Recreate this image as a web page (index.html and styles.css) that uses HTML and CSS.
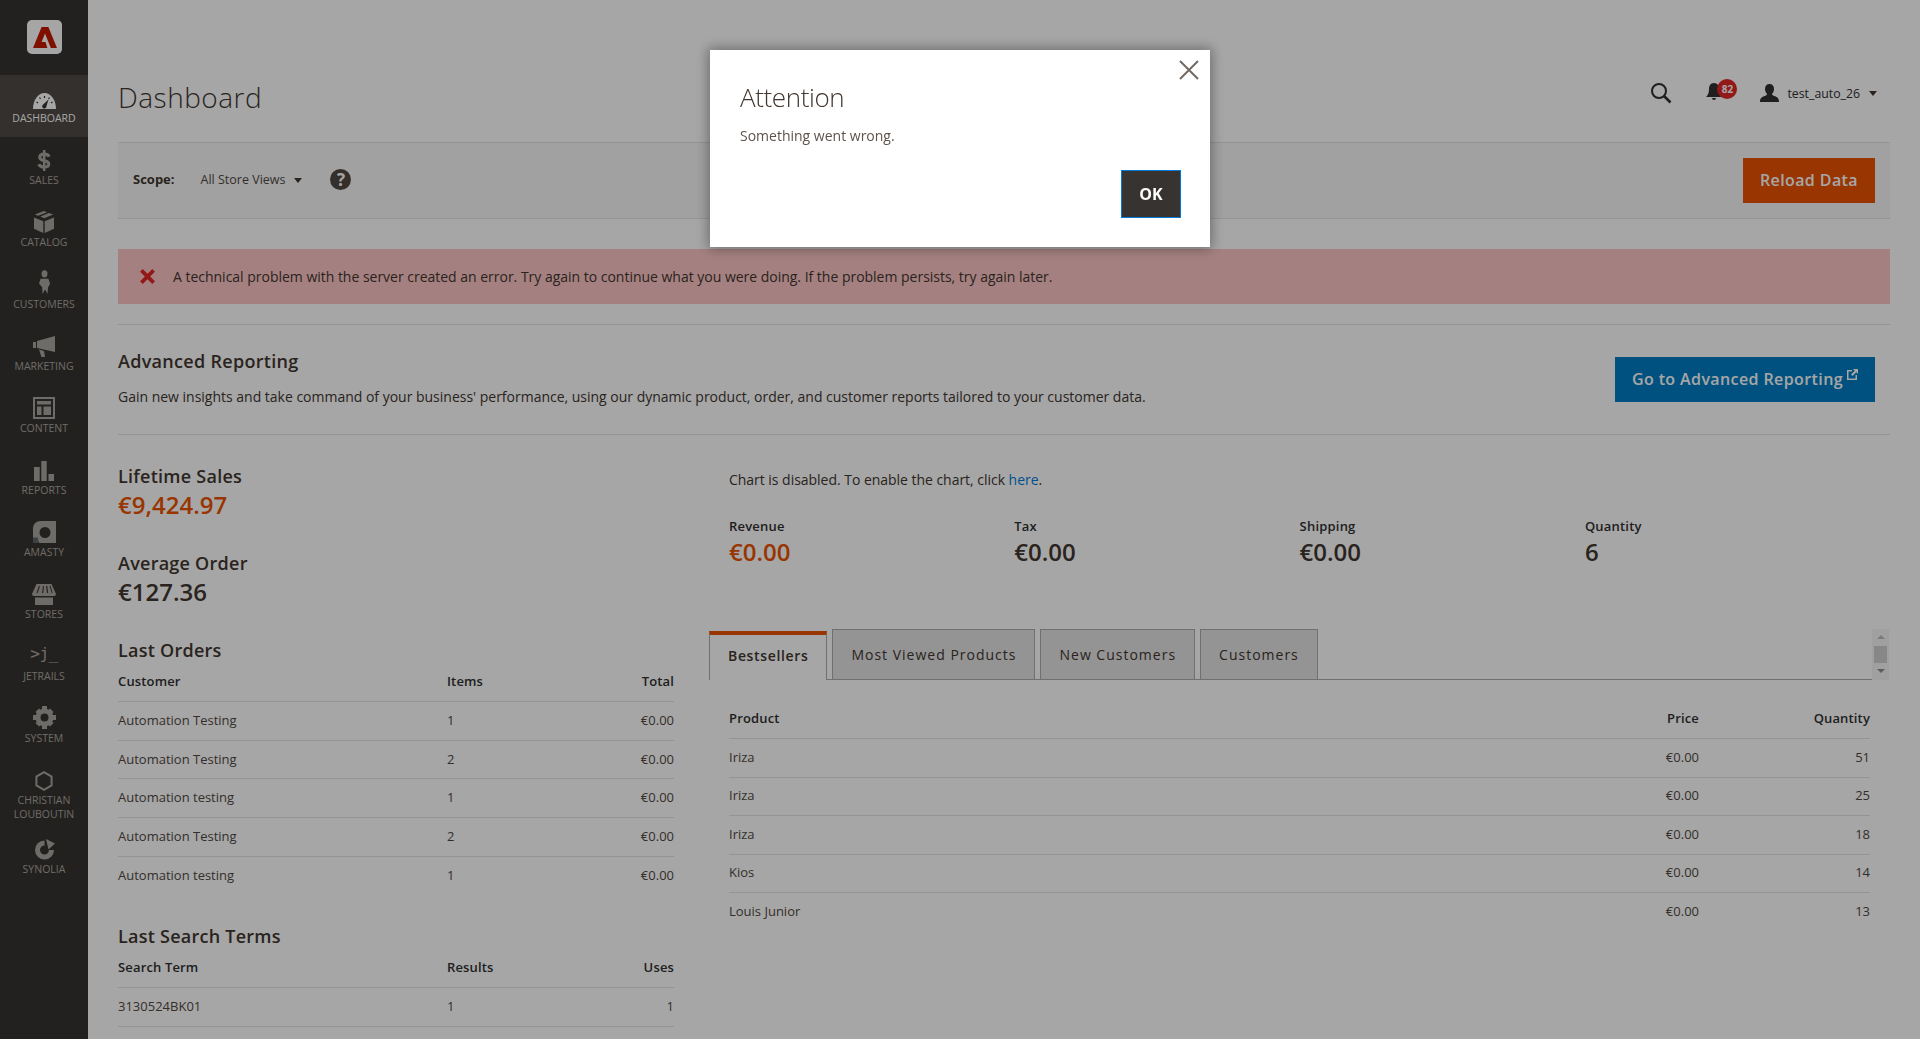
FILE: index.html
```html
<!DOCTYPE html>
<html lang="en">
<head>
  <meta charset="UTF-8">
  <title>Dashboard / Magento Admin</title>
  <link rel="stylesheet" href="styles.css">
</head>
<body>

<div class="page">
  <nav class="sidebar">
    <div class="logo">
      <div class="logo-box">
        <svg width="24" height="21" viewBox="0 0 24 21"><path d="M8.600 0h6.800L24 21h-6.200L12 6.600 8.600 15h3.900l1.900 6H0z" fill="#c41a00"/></svg>
      </div>
    </div>
    <a class="nav-item active">
      <svg class="nav-icon" width="23" height="16" viewBox="0 0 23 16"><path d="M0 16C0 7 5 0 11.500 0S23 7 23 16z" fill="#fff"/><path d="M3.500 9l1.500 1M6.500 4.500l1 1.500M11.500 3v2M16.500 4.500l-1 1.500M19.500 9L18 10" stroke="#373330" stroke-width="1.200"/><path d="M15.500 6.500l-2 6.500a2.200 2.200 0 1 1-3.300-1.600z" fill="#373330"/></svg>
      <span>Dashboard</span>
    </a>
    <a class="nav-item">
      <svg class="nav-icon" width="14" height="21" viewBox="0 0 14 22"><path d="M12.500 7C11.500 5 9.500 4.300 7.200 4.300 4.500 4.300 2.500 5.500 2.500 7.700c0 5 9.500 2.300 9.500 7 0 2.200-2 3.200-4.800 3.200-2.700 0-4.700-1-5.700-3" fill="none" stroke="#aaa6a0" stroke-width="3.200"/><path d="M7.200 0v22" stroke="#aaa6a0" stroke-width="2.600"/></svg>
      <span>Sales</span>
    </a>
    <a class="nav-item">
      <svg class="nav-icon" width="20" height="22" viewBox="0 0 20 22"><path d="M0 6.500l9.300 3.700V22L0 17.800zM20 6.500l-9.300 3.700V22L20 17.800zM10 0l3 1.200-8.800 3.600-3.400-1.300zM15 2l4.200 1.500-8.900 3.800-4-1.700z" fill="#aaa6a0"/></svg>
      <span>Catalog</span>
    </a>
    <a class="nav-item">
      <svg class="nav-icon person" width="11" height="24" viewBox="0 0 14 25" preserveAspectRatio="none"><circle cx="7" cy="4" r="3.800" fill="#aaa6a0"/><path d="M2 9h10l2 5-1.500 3-1 1-.7 7-2.300-4-1.500 0-2.300 4-.7-7-1-1L0 14z" fill="#aaa6a0"/></svg>
      <span>Customers</span>
    </a>
    <a class="nav-item">
      <svg class="nav-icon" width="22" height="21" viewBox="0 0 22 21"><path d="M0 6h3v6H0zM4 5l18-5v16L4 12zM6 13.500l5 1.500 1 6H8.500z" fill="#aaa6a0"/></svg>
      <span>Marketing</span>
    </a>
    <a class="nav-item">
      <svg class="nav-icon" width="22" height="22" viewBox="0 0 22 22"><path fill-rule="evenodd" d="M0 0h22v22H0zM2 2v18h18V2zM4 4h14v3.500H4zM4 9.500h4.500V18H4zM10.500 9.500H18V18h-7.500z" fill="#aaa6a0"/></svg>
      <span>Content</span>
    </a>
    <a class="nav-item">
      <svg class="nav-icon" width="20" height="20" viewBox="0 0 20 20"><path d="M0 6h5.700v14H0zM7.300 0h5.400v20H7.300zM14.500 13H20v7h-5.500z" fill="#aaa6a0"/></svg>
      <span>Reports</span>
    </a>
    <a class="nav-item">
      <svg class="nav-icon" width="23" height="22" viewBox="0 0 23 22"><path fill-rule="evenodd" d="M8 0h15v22H6l-1-3H0V8C0 3 3 0 8 0zm4 6a5.500 5.500 0 1 0 0 11 5.500 5.500 0 0 0 0-11z" fill="#aaa6a0"/><path d="M0 16.500h5V22H0z" fill="#5d6468"/></svg>
      <span>Amasty</span>
    </a>
    <a class="nav-item">
      <svg class="nav-icon" width="24" height="21" viewBox="0 0 24 21"><path fill-rule="evenodd" d="M4.500 0h15L24 10a2 2 0 0 1-2 2H2a2 2 0 0 1-2-2zM7 2L4.500 9h1.200L8 2zM11 2l-1 7h1.200L12 2zM14 2l1 7h1.200L15.200 2zM17.500 2l2.200 7h.9l-2-7zM3 13.500h18V21H3z" fill="#aaa6a0"/></svg>
      <span>Stores</span>
    </a>
    <a class="nav-item">
      <span class="nav-mono">&gt;j_</span>
      <span>JetRails</span>
    </a>
    <a class="nav-item">
      <svg class="nav-icon" width="23" height="23" viewBox="0 0 23 23"><circle cx="11.500" cy="11.500" r="6.500" fill="none" stroke="#aaa6a0" stroke-width="5"/><path d="M9 0h5v5H9zM9 18h5v5H9zM0 9h5v5H0zM18 9h5v5h-5zM2.500 6l3.500-3.500 3 3-3.500 3.500zM17 2.500L20.500 6l-3 3.500-3.500-3.500zM2.500 17L6 20.500l3-3-3.500-3.500zM17 20.500l3.500-3.500-3-3-3.500 3.500z" fill="#aaa6a0"/></svg>
      <span>System</span>
    </a>
    <a class="nav-item tall">
      <svg class="nav-icon" width="18" height="20" viewBox="0 0 18 20"><path d="M9 1.200l7.600 4.400v8.800L9 18.800l-7.600-4.400V5.600z" fill="none" stroke="#aaa6a0" stroke-width="2"/></svg>
      <span>Christian Louboutin</span>
    </a>
    <a class="nav-item">
      <svg class="nav-icon" width="21" height="21" viewBox="0 0 21 21"><path d="M10.500 4A7 7 0 1 0 17.500 11" fill="none" stroke="#aaa6a0" stroke-width="5"/><path d="M12 0l9 4.500-6.500 6z" fill="#aaa6a0"/></svg>
      <span>Synolia</span>
    </a>
  </nav>

  <main class="main">
    <header class="page-header">
      <h1>Dashboard</h1>
      <div class="header-actions">
        <svg class="search-icon" width="22" height="22" viewBox="0 0 22 22"><circle cx="9" cy="9" r="7" fill="none" stroke="#303030" stroke-width="2"/><path d="M14 14l6.500 6.500" stroke="#303030" stroke-width="2.600"/></svg>
        <div class="bell">
          <svg width="16" height="18" viewBox="0 0 16 18"><path d="M8 0c3.500 0 5 3 5 6 0 4 1 6 3 8H0c2-2 3-4 3-8 0-3 1.500-6 5-6zM6 15h4a2 2 0 0 1-4 0z" fill="#303030"/></svg>
          <span class="badge">82</span>
        </div>
        <div class="user">
          <svg width="19" height="18" viewBox="0 0 19 18"><path d="M9.500 0c3 0 4.500 2 4.500 5 0 2-1 4-2 5 0 1 1 1.500 3 2.300 2 .8 4 1.700 4 5.700H0c0-4 2-4.900 4-5.700 2-.8 3-1.300 3-2.300-1-1-2-3-2-5 0-3 1.500-5 4.500-5z" fill="#303030"/></svg>
          <span class="user-name">test_auto_26</span>
          <i class="caret"></i>
        </div>
      </div>
    </header>

    <div class="scope-bar">
      <strong>Scope:</strong>
      <span class="scope-value">All Store Views</span>
      <i class="caret dark"></i>
      <span class="help">?</span>
      <a class="btn btn-orange">Reload Data</a>
    </div>

    <div class="error-msg">
      <svg width="17" height="17" viewBox="0 0 16 16"><path d="M1 3.500L3.500 1 8 5.500 12.500 1 15 3.500 10.500 8l4.500 4.500-2.500 2.500L8 10.500 3.500 15 1 12.500 5.500 8z" fill="#e22626"/></svg>
      <span>A technical problem with the server created an error. Try again to continue what you were doing. If the problem persists, try again later.</span>
    </div>

    <section class="advanced">
      <div>
        <h2>Advanced Reporting</h2>
        <p>Gain new insights and take command of your business' performance, using our dynamic product, order, and customer reports tailored to your customer data.</p>
      </div>
      <a class="btn btn-blue">Go to Advanced Reporting
        <svg class="ext" width="11" height="11" viewBox="0 0 11 11"><path d="M0 1h5v1.500H1.500v7h7V6H10v5H0zM6 0h5v5L9.300 3.300 5.500 7 4 5.500l3.700-3.800z" fill="#fff"/></svg>
      </a>
    </section>

    <div class="dash-grid">
      <div class="col-left">
        <div class="stat">
          <h3>Lifetime Sales</h3>
          <div class="stat-value orange">€9,424.97</div>
        </div>
        <div class="stat">
          <h3>Average Order</h3>
          <div class="stat-value">€127.36</div>
        </div>

        <h3 class="table-title">Last Orders</h3>
        <table class="data no-end-line">
          <thead><tr><th class="c1">Customer</th><th class="c2">Items</th><th class="num">Total</th></tr></thead>
          <tbody>
            <tr><td>Automation Testing</td><td>1</td><td class="num">€0.00</td></tr>
            <tr><td>Automation Testing</td><td>2</td><td class="num">€0.00</td></tr>
            <tr><td>Automation testing</td><td>1</td><td class="num">€0.00</td></tr>
            <tr><td>Automation Testing</td><td>2</td><td class="num">€0.00</td></tr>
            <tr><td>Automation testing</td><td>1</td><td class="num">€0.00</td></tr>
          </tbody>
        </table>

        <h3 class="table-title search-title">Last Search Terms</h3>
        <table class="data">
          <thead><tr><th class="c1">Search Term</th><th class="c2">Results</th><th class="num">Uses</th></tr></thead>
          <tbody>
            <tr><td>3130524BK01</td><td>1</td><td class="num">1</td></tr>
          </tbody>
        </table>
      </div>

      <div class="col-right">
        <p class="chart-note">Chart is disabled. To enable the chart, click <a>here</a>.</p>
        <div class="totals">
          <div><label>Revenue</label><b class="orange">€0.00</b></div>
          <div><label>Tax</label><b>€0.00</b></div>
          <div><label>Shipping</label><b>€0.00</b></div>
          <div><label>Quantity</label><b>6</b></div>
        </div>

        <div class="tabs">
          <a class="tab current">Bestsellers</a>
          <a class="tab">Most Viewed Products</a>
          <a class="tab">New Customers</a>
          <a class="tab">Customers</a>
          <div class="tab-scroll">
            <i class="arrow up"></i>
            <i class="thumb"></i>
            <i class="arrow down"></i>
          </div>
        </div>

        <table class="data products no-end-line">
          <thead><tr><th>Product</th><th class="num c-price">Price</th><th class="num c-qty">Quantity</th></tr></thead>
          <tbody>
            <tr><td>Iriza</td><td class="num">€0.00</td><td class="num">51</td></tr>
            <tr><td>Iriza</td><td class="num">€0.00</td><td class="num">25</td></tr>
            <tr><td>Iriza</td><td class="num">€0.00</td><td class="num">18</td></tr>
            <tr><td>Kios</td><td class="num">€0.00</td><td class="num">14</td></tr>
            <tr><td>Louis Junior</td><td class="num">€0.00</td><td class="num">13</td></tr>
          </tbody>
        </table>
      </div>
    </div>
  </main>
</div>

<div class="overlay"></div>

<div class="modal">
  <svg class="modal-close" width="20" height="20" viewBox="0 0 20 20"><path d="M1 1l18 18M19 1L1 19" stroke="#736963" stroke-width="2"/></svg>
  <h2>Attention</h2>
  <p>Something went wrong.</p>
  <div class="modal-footer">
    <button class="btn-ok">OK</button>
  </div>
</div>

</body>
</html>
```

FILE: styles.css
```css
* {
  box-sizing: border-box;
}
html, body {
  margin: 0;
  height: 1039px;
  overflow: hidden;
}
body {
  font-family: "Open Sans", sans-serif;
  font-size: 14px;
  color: #41362f;
  background-color: #fff;
}
h1, h2, h3, p {
  margin: 0;
}
.page {
  display: flex;
  height: 1039px;
}

/* sidebar */
.sidebar {
  width: 88px;
  flex-shrink: 0;
  background-color: #373330;
}
.logo {
  height: 75px;
  padding: 20px 0 0 27px;
}
.logo-box {
  width: 35px;
  height: 34px;
  background-color: #fff;
  border-radius: 5px;
  display: flex;
  align-items: center;
  justify-content: center;
}
.nav-item {
  height: 62px;
  display: flex;
  flex-direction: column;
  align-items: center;
  justify-content: flex-end;
  padding-bottom: 12px;
  color: #aaa6a0;
  font-size: 10.5px;
  line-height: 14px;
  text-transform: uppercase;
  text-align: center;
}
.nav-item.active {
  background-color: #4f4a46;
  color: #fff;
}
.nav-item.tall {
  height: 69px;
  padding-bottom: 5px;
}
.nav-icon {
  margin-bottom: 2px;
}
.nav-icon.person {
  margin-bottom: 3px;
}
.nav-mono {
  font-family: "DejaVu Sans Mono", monospace;
  font-size: 16px;
  line-height: 19px;
  margin-bottom: 6px;
  letter-spacing: -.5px;
  text-transform: none;
}

/* main */
.main {
  flex: 1;
  padding: 0 30px;
  min-width: 0;
}
.page-header {
  height: 142px;
  display: flex;
  justify-content: space-between;
  align-items: flex-start;
}
.page-header h1 {
  font-size: 28px;
  font-weight: 300;
  line-height: 38px;
  margin-top: 78px;
  letter-spacing: .5px;
}
.header-actions {
  display: flex;
  align-items: center;
  margin-top: 82px;
  padding-right: 13px;
  color: #303030;
  font-size: 12.3px;
}
.search-icon {
  margin-right: 34px;
}
.bell {
  position: relative;
  width: 54px;
  height: 20px;
}
.badge {
  position: absolute;
  left: 11px;
  top: -4px;
  width: 20px;
  height: 20px;
  border-radius: 50%;
  background-color: #e22626;
  color: #fff;
  font-size: 10px;
  font-weight: 700;
  line-height: 20px;
  text-align: center;
}
.user {
  display: flex;
  align-items: center;
  gap: 9px;
}
.user svg {
  margin-right: -1px;
}
.caret {
  width: 0;
  height: 0;
  border-left: 4px solid transparent;
  border-right: 4px solid transparent;
  border-top: 5px solid #41362f;
}
.caret.dark {
  margin-left: 9px;
  margin-right: 28px;
  margin-top: 2px;
}

.scope-bar {
  height: 77px;
  display: flex;
  align-items: center;
  padding: 0 15px 2px;
  background-color: #f8f8f8;
  border-top: 1px solid #e3e3e3;
  border-bottom: 1px solid #e3e3e3;
  font-size: 12.5px;
}
.scope-bar strong {
  font-size: 13px;
  margin: 0 26px 2px 0;
}
.scope-value {
  color: #514943;
}
.help {
  width: 21px;
  height: 21px;
  border-radius: 50%;
  background-color: #514943;
  color: #fff;
  font-size: 17px;
  font-weight: 700;
  line-height: 21px;
  text-align: center;
}
.btn {
  display: inline-flex;
  align-items: center;
  height: 45px;
  padding: 0 17px 2px;
  color: #fff;
  font-size: 16px;
  font-weight: 600;
  letter-spacing: .4px;
}
.btn-orange {
  background-color: #eb5202;
  margin-left: auto;
  margin-top: 2px;
}
.btn-blue {
  background-color: #007dc3;
  align-self: flex-start;
  margin-top: 32px;
  margin-right: 15px;
  flex-shrink: 0;
  white-space: nowrap;
}
.ext {
  margin: -9px 0 0 4px;
}

.error-msg {
  height: 55px;
  margin-top: 30px;
  padding-left: 21px;
  display: flex;
  align-items: center;
  gap: 17px;
  background-color: #fdc5c5;
  color: #41362f;
  letter-spacing: -.015px;
}

.advanced {
  height: 111px;
  margin-top: 20px;
  display: flex;
  justify-content: space-between;
  border-top: 1px solid #e3e3e3;
  border-bottom: 1px solid #e3e3e3;
}
.advanced h2 {
  font-size: 18px;
  font-weight: 600;
  line-height: 25px;
  margin-top: 24px;
  letter-spacing: .3px;
}
.advanced p {
  margin-top: 13px;
  line-height: 20px;
  letter-spacing: -.01px;
}

.dash-grid {
  display: grid;
  grid-template-columns: 556px 1fr;
  column-gap: 34px;
}
.col-left h3 {
  font-size: 18px;
  font-weight: 600;
  line-height: 25px;
  letter-spacing: .25px;
}
.stat {
  padding-top: 29px;
  height: 87px;
}
.stat-value {
  font-size: 24px;
  font-weight: 600;
  line-height: 32px;
}
.orange {
  color: #eb5202;
}
.table-title {
  margin-top: 29px;
  margin-bottom: 8px;
}
.search-title {
  margin-top: 29px;
}
.data {
  width: 100%;
  border-collapse: collapse;
  table-layout: fixed;
  font-size: 13px;
}
.data th {
  font-weight: 600;
  text-align: left;
  color: #303030;
  padding: 1px 0 11px;
  line-height: 18px;
  letter-spacing: .15px;
  border-bottom: 1px solid #e3e3e3;
}
.data td {
  height: 38.7px;
  padding: 0 0 2px;
  color: #514943;
  border-bottom: 1px solid #e3e3e3;
}
.no-end-line tr:last-child td {
  border-bottom: 0;
}
.data .num {
  text-align: right;
}
.c1 {
  width: 329px;
}
.c2 {
  width: 120px;
}

.col-right {
  min-width: 0;
}
.chart-note {
  margin: 35px 0 0 21px;
  line-height: 20px;
  letter-spacing: -.03px;
}
.chart-note a {
  color: #007bdb;
}
.totals {
  display: grid;
  grid-template-columns: repeat(4, 285.3px);
  margin: 27px 0 0 21px;
}
.totals label {
  display: block;
  font-size: 13px;
  font-weight: 600;
  line-height: 18px;
  color: #303030;
  letter-spacing: .2px;
}
.totals b {
  display: block;
  font-size: 24px;
  font-weight: 600;
  line-height: 32px;
  margin-top: 1px;
}
.tabs {
  display: flex;
  gap: 5px;
  height: 51px;
  margin: 61px 18px 0 1px;
  border-bottom: 1px solid #adadad;
  position: relative;
}
.tab {
  display: flex;
  align-items: center;
  padding: 0 18px;
  height: 50px;
  background-color: #e3e3e3;
  border: 1px solid #adadad;
  border-bottom: 0;
  font-size: 14px;
  letter-spacing: 1px;
  color: #41362f;
}
.tab.current {
  height: 49px;
  margin-top: 2px;
  margin-bottom: -1px;
  padding-bottom: 5px;
  font-weight: 600;
  background-color: #fff;
  border-top: 4px solid #eb5202;
  letter-spacing: .65px;
}
.tab-scroll {
  position: absolute;
  right: -17px;
  top: 0;
  width: 17px;
  height: 51px;
  background-color: #f6f6f6;
  display: flex;
  flex-direction: column;
  align-items: center;
}
.thumb {
  width: 13px;
  height: 17px;
  margin: 7px 0 6px;
  background-color: #cfcfcf;
}
.arrow {
  width: 0;
  height: 0;
  border-left: 4px solid transparent;
  border-right: 4px solid transparent;
}
.arrow.up {
  margin-top: 6px;
  border-bottom: 4px solid #bdbdbd;
}
.arrow.down {
  border-top: 4px solid #8f8f8f;
}
.products {
  margin: 28px 20px 0 21px;
  width: 1141px;
}
.products td {
  height: 38.5px;
}
.c-price {
  width: 80px;
}
.c-qty {
  width: 171px;
}

/* modal */
.overlay {
  position: fixed;
  inset: 0;
  background-color: rgba(0, 0, 0, .35);
}
.modal {
  position: fixed;
  left: 710px;
  top: 50px;
  width: 500px;
  height: 197px;
  padding: 30px;
  background-color: #fff;
  box-shadow: 0 0 12px 2px rgba(0, 0, 0, .35);
}
.modal h2 {
  font-size: 26px;
  font-weight: 300;
  line-height: 34px;
  letter-spacing: -.4px;
}
.modal p {
  margin-top: 12px;
  line-height: 20px;
  color: #5e534c;
}
.modal-close {
  position: absolute;
  right: 11px;
  top: 10px;
}
.modal-footer {
  display: flex;
  justify-content: flex-end;
  margin: 24px -1px 0 0;
}
.btn-ok {
  width: 60px;
  height: 48px;
  background-color: #373330;
  border: 1px solid #007bdb;
  color: #fff;
  font-family: "Open Sans", sans-serif;
  font-size: 16px;
  font-weight: 700;
  padding: 0;
}
```
